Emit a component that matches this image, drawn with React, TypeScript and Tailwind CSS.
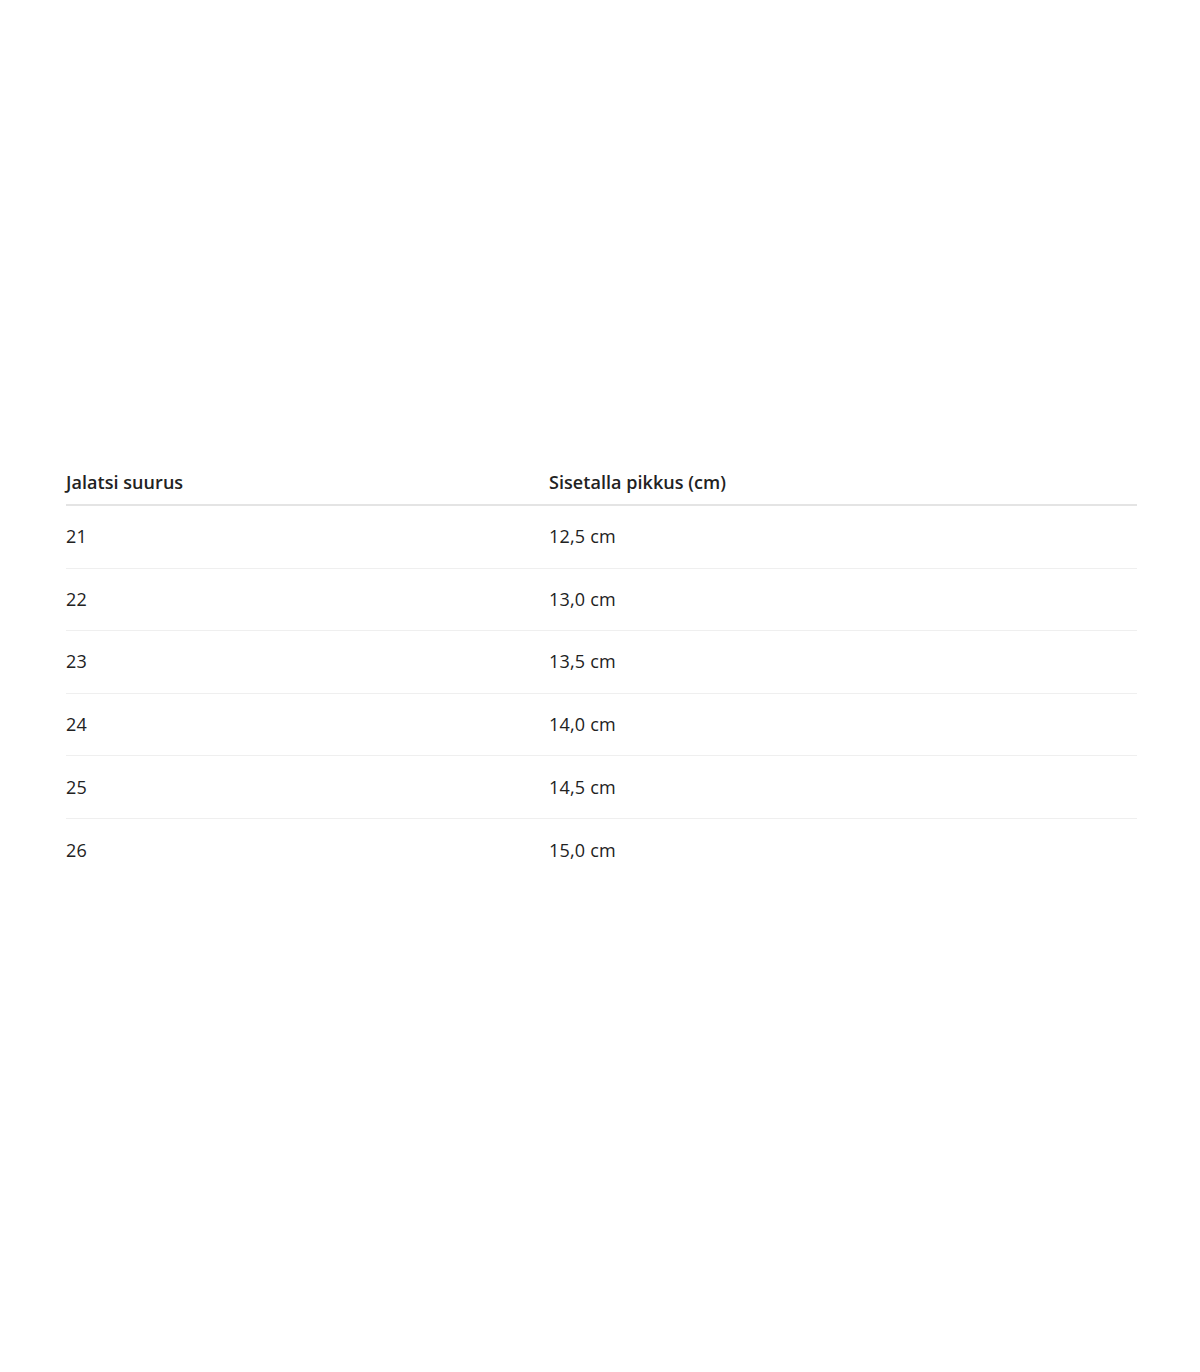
const rows = [
  ['21', '12,5 cm'],
  ['22', '13,0 cm'],
  ['23', '13,5 cm'],
  ['24', '14,0 cm'],
  ['25', '14,5 cm'],
  ['26', '15,0 cm'],
];

export default function App() {
  return (
    <div className="h-[1372px] w-[1200px] bg-white pt-[461px] font-['Open_Sans',sans-serif] text-[18px] text-[#222]">
      <div className="mx-[66px] w-[1071px]">
        <div className="grid h-[45px] grid-cols-[483px_1fr] items-center border-b-2 border-[#e4e4e4] pb-[1px] font-semibold tracking-[0.05px]">
          <div>Jalatsi suurus</div>
          <div>Sisetalla pikkus (cm)</div>
        </div>
        {rows.map(([size, length], i) => (
          <div
            key={size}
            className={`grid h-[62.6px] grid-cols-[483px_1fr] items-center tracking-[0.2px] ${
              i < rows.length - 1 ? 'border-b border-[#efefef]' : ''
            }`}
          >
            <div>{size}</div>
            <div>{length}</div>
          </div>
        ))}
      </div>
    </div>
  );
}
